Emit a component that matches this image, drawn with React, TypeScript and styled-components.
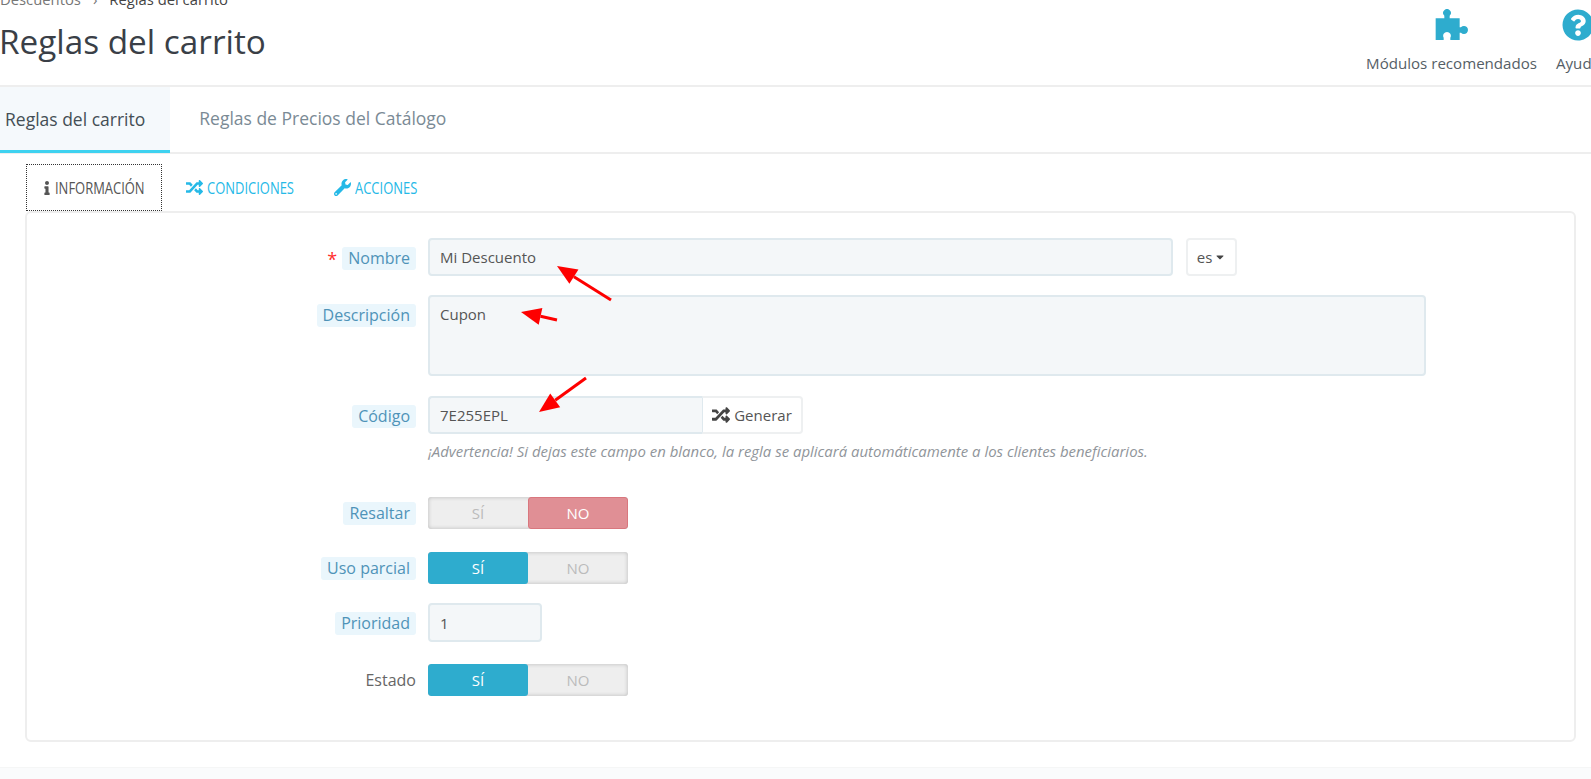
import React from "react";
import styled, { createGlobalStyle } from "styled-components";
import { FaQuestionCircle, FaInfo, FaRandom, FaWrench, FaCaretDown } from "react-icons/fa";

const Global = createGlobalStyle`
  html, body { margin: 0; padding: 0; background: #fff; overflow: hidden; }
  body { font-family: "Open Sans", "Liberation Sans", sans-serif; color: #555; width: 1591px; height: 779px; }
`;
const Page = styled.div`
  position: relative; width: 1591px; height: 779px; overflow: hidden; display: flex; flex-direction: column;
`;
const Header = styled.header`
  height: 85px; flex: none; display: flex; justify-content: space-between; border-bottom: 2px solid #eee;
`;
const TitleBlock = styled.div`
  display: flex; flex-direction: column; margin-top: -10px;
`;
const Crumbs = styled.div`
  font-size: 14.8px; line-height: 19px; color: #777; white-space: nowrap; display: flex; gap: 12px;
  b { font-weight: 400; color: #444; }
`;
const Title = styled.h1`
  margin: 10px 0 0 -1px; font-size: 33.3px; line-height: 44px; font-weight: 400; color: #3a3f47; white-space: nowrap;
`;
const Actions = styled.div`
  display: flex; gap: 19px; margin-right: -9px; padding-top: 9px;
`;
const Action = styled.div`
  display: flex; flex-direction: column; align-items: center; font-size: 15.1px; line-height: 20px; color: #555e66; white-space: nowrap;
  svg { color: #2eacce; height: 32px; width: auto; margin-bottom: 12px; }
`;
const TabBar = styled.nav`
  flex: none; display: flex; height: 65px; border-bottom: 2px solid #eee; align-items: stretch; box-sizing: content-box;
`;
const Tab = styled.div<{ $active?: boolean }>`
  display: flex; align-items: center; font-size: 17.5px; white-space: nowrap; box-sizing: border-box;
  padding: ${p => (p.$active ? "0 25px 0 5px" : "0 28px 0 29px")};
  color: ${p => (p.$active ? "#444e55" : "#7a8a95")};
  background: ${p => (p.$active ? "#f5f9fc" : "#fff")};
  ${p => (p.$active ? "border-bottom: 3px solid #3ed2f0; margin-bottom: -1px;" : "padding-bottom: 3px;")}
`;
const Content = styled.div`
  flex: none; padding: 10px 15px 0 25px;
`;
const SubTabs = styled.div`
  display: flex; height: 47px; align-items: stretch;
`;
const SubTab = styled.div<{ $active?: boolean }>`
  display: flex; align-items: center; box-sizing: border-box; white-space: nowrap;
  gap: ${p => (p.$active ? "1px" : "4px")};
  width: ${p => (p.$active ? "136px" : "auto")};
  padding-left: ${p => (p.$active ? "13px" : "0")};
  margin-right: ${p => (p.$active ? "24px" : "40px")};
  margin-left: ${p => (p.$active ? "1px" : "0")};
  color: ${p => (p.$active ? "#555" : "#25b9e7")};
  border: ${p => (p.$active ? "1px dotted #333" : "0 solid transparent")};
  svg { flex: none; font-size: ${p => (p.$active ? "14px" : "17px")}; }
`;
const SubText = styled.span<{ $w: number }>`
  display: inline-block; width: ${p => p.$w}px; font-size: 16px; line-height: 20px; text-transform: uppercase;
  transform: scaleX(.81); transform-origin: left center;
`;
const Panel = styled.section`
  box-sizing: border-box; height: 531px; margin-top: 0; border: 2px solid #eeeeee; border-radius: 6px; background: #fff;
  padding-top: 25px; display: flex; flex-direction: column;
`;
const Row = styled.div<{ $mt?: number; $top?: boolean }>`
  display: grid; grid-template-columns: 389px 1fr; column-gap: 12px;
  align-items: ${p => (p.$top ? "start" : "center")}; margin-top: ${p => p.$mt ?? 0}px;
`;
const LabelCell = styled.div<{ $offset?: number }>`
  display: flex; justify-content: flex-end; align-items: center; gap: 5px; margin-top: ${p => p.$offset ?? 0}px;
`;
const Star = styled.span`
  color: #ff2d2d; font-size: 18px; line-height: 1; position: relative; top: 1px;
`;
const Label = styled.span<{ $plain?: boolean }>`
  font-size: 16px; line-height: 23px; border-radius: 3px; white-space: nowrap;
  padding: 0 6px;
  margin-right: ${p => (p.$plain ? "-6px" : "0")};
  color: ${p => (p.$plain ? "#666" : "#4f93b8")};
  background: ${p => (p.$plain ? "transparent" : "#eaf6fc")};
`;
const Field = styled.div<{ $w: number; $h?: number; $area?: boolean }>`
  box-sizing: border-box; width: ${p => p.$w}px; height: ${p => p.$h ?? 38}px;
  background: #f4f7f9; border: 2px solid #dfe9ee; border-radius: 4px; padding: 0 10px;
  display: flex; align-items: ${p => (p.$area ? "flex-start" : "center")}; font-size: 15px; color: #555;
  padding-top: ${p => (p.$area ? "7px" : "0")};
`;
const Inline = styled.div`
  display: flex; align-items: center;
`;
const LangButton = styled.div`
  box-sizing: border-box; width: 51px; height: 38px; margin-left: 13px; border: 2px solid #eef0f1; border-radius: 4px;
  display: flex; align-items: center; justify-content: center; gap: 2px; font-size: 15px; color: #555;
  svg { font-size: 12px; color: #444; }
`;
const GenButton = styled.div`
  box-sizing: border-box; width: 101px; height: 38px; border: 2px solid #eef0f1; border-left: 1px solid #dfe9ee; border-radius: 0 4px 4px 0;
  display: flex; align-items: center; justify-content: center; gap: 4px; font-size: 15px; color: #555;
  svg { font-size: 18px; color: #444; }
`;
const CodeField = styled(Field)`
  border-right: none; border-radius: 4px 0 0 4px;
`;
const Help = styled.div`
  grid-column: 2; font-size: 14.95px; font-style: italic; color: #90959a; margin-top: 9px; line-height: 17px; white-space: nowrap;
`;
const Switch = styled.div`
  display: flex; width: 200px; height: 32px; border-radius: 3px; overflow: hidden; background: #eee;
  box-shadow: inset 0 0 4px rgba(0,0,0,.22);
`;
const Opt = styled.div<{ $tone?: "on" | "off" }>`
  width: 100px; display: flex; align-items: center; justify-content: center; font-size: 15px; box-sizing: border-box;
  color: ${p => (p.$tone ? "#fff" : "#bbb")};
  background: ${p => (p.$tone === "on" ? "#2eacce" : p.$tone === "off" ? "#e08f95" : "transparent")};
  border: ${p => (p.$tone === "off" ? "1px solid #d9777e" : "none")};
  border-radius: ${p => (p.$tone ? "3px" : "0")};
`;
const Footer = styled.div`
  position: absolute; left: 0; right: 0; top: 767px; bottom: 0; background: #fafbfc; border-top: 1px solid #f5f6f6;
`;
const Arrows = styled.svg`
  position: absolute; left: 0; top: 0; pointer-events: none;
`;

const Puzzle = () => (
  <svg viewBox="0 0 102 96" fill="currentColor">
    <path d="M2 28H28V20A11.5 11.5 0 1 1 44 20V28H74V55H78A12 12 0 1 1 78 71H74V93H46V86A11.5 11.5 0 1 0 26 86V93H2Z" />
  </svg>
);

const Yes = ({ on }: { on: boolean }) => (
  <Switch>
    <Opt $tone={on ? "on" : undefined}>SÍ</Opt>
    <Opt $tone={on ? undefined : "off"}>NO</Opt>
  </Switch>
);

const Arrow = ({ x1, y1, x2, y2 }: { x1: number; y1: number; x2: number; y2: number }) => {
  const a = Math.atan2(y2 - y1, x2 - x1);
  const len = 20, half = 8.5;
  const bx = x2 - len * Math.cos(a), by = y2 - len * Math.sin(a);
  const px = -Math.sin(a) * half, py = Math.cos(a) * half;
  return (
    <g>
      <line x1={x1} y1={y1} x2={bx} y2={by} stroke="#fe0000" strokeWidth="3" />
      <polygon points={`${x2},${y2} ${bx + px},${by + py} ${bx - px},${by - py}`} fill="#fe0000" />
    </g>
  );
};

export default function App() {
  return (
    <Page>
      <Global />
      <Header>
        <TitleBlock>
          <Crumbs><span>Descuentos</span><span>›</span><b>Reglas del carrito</b></Crumbs>
          <Title>Reglas del carrito</Title>
        </TitleBlock>
        <Actions>
          <Action><Puzzle />Módulos recomendados</Action>
          <Action><FaQuestionCircle />Ayuda</Action>
        </Actions>
      </Header>
      <TabBar>
        <Tab $active>Reglas del carrito</Tab>
        <Tab>Reglas de Precios del Catálogo</Tab>
      </TabBar>
      <Content>
        <SubTabs>
          <SubTab $active><FaInfo /><SubText $w={90}>Información</SubText></SubTab>
          <SubTab><FaRandom /><SubText $w={87}>Condiciones</SubText></SubTab>
          <SubTab><FaWrench /><SubText $w={61}>Acciones</SubText></SubTab>
        </SubTabs>
        <Panel>
          <Row>
            <LabelCell $offset={2}><Star>*</Star><Label>Nombre</Label></LabelCell>
            <Inline><Field $w={745}>Mi Descuento</Field><LangButton>es<FaCaretDown /></LangButton></Inline>
          </Row>
          <Row $mt={19} $top>
            <LabelCell $offset={9}><Label>Descripción</Label></LabelCell>
            <Field $w={998} $h={81} $area>Cupon</Field>
          </Row>
          <Row $mt={20}>
            <LabelCell $offset={2}><Label>Código</Label></LabelCell>
            <Inline><CodeField $w={274}>7E255EPL</CodeField><GenButton><FaRandom />Generar</GenButton></Inline>
            <Help>¡Advertencia! Si dejas este campo en blanco, la regla se aplicará automáticamente a los clientes beneficiarios.</Help>
          </Row>
          <Row $mt={37}>
            <LabelCell><Label>Resaltar</Label></LabelCell>
            <Yes on={false} />
          </Row>
          <Row $mt={23}>
            <LabelCell><Label>Uso parcial</Label></LabelCell>
            <Yes on />
          </Row>
          <Row $mt={19}>
            <LabelCell $offset={2}><Label>Prioridad</Label></LabelCell>
            <Field $w={114} $h={39}>1</Field>
          </Row>
          <Row $mt={22}>
            <LabelCell><Label $plain>Estado</Label></LabelCell>
            <Yes on />
          </Row>
        </Panel>
      </Content>
      <Footer />
      <Arrows width="1591" height="779" viewBox="0 0 1591 779">
        <Arrow x1={611} y1={300} x2={557} y2={266} />
        <Arrow x1={557} y1={320} x2={521} y2={312} />
        <Arrow x1={586} y1={378} x2={539} y2={412} />
      </Arrows>
    </Page>
  );
}
